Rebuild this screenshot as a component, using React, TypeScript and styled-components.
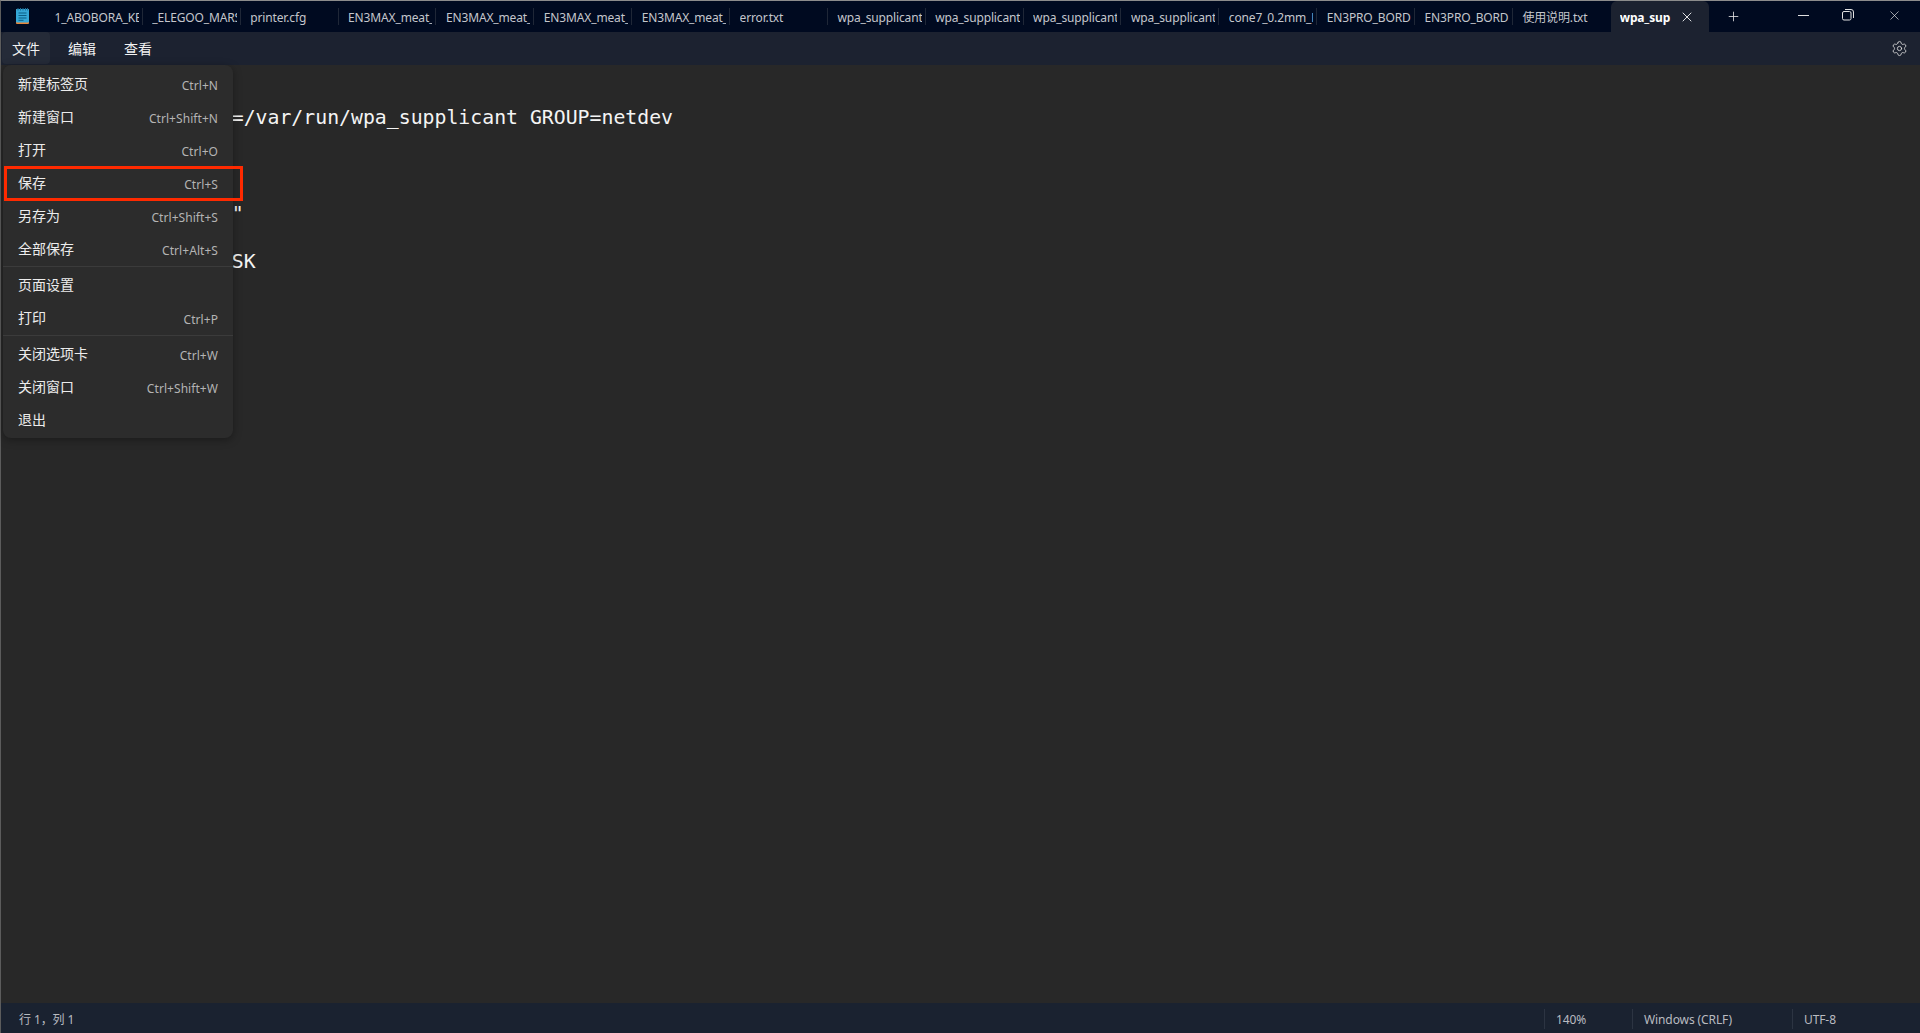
import styled, { createGlobalStyle } from "styled-components"
import { Plus, Settings, X } from "lucide-react"

const GlobalStyle = createGlobalStyle`
  html, body {
    margin: 0;
    padding: 0;
    height: 100%;
    overflow: hidden;
    background: #282828;
  }
  * { box-sizing: border-box; }
`

const Window = styled.div`
  width: 1920px;
  height: 1033px;
  display: flex;
  flex-direction: column;
  position: relative;
  border-top: 1px solid #8c8c8c;
  border-left: 1px solid #5c5c5c;
  font-family: "Noto Sans", "Noto Sans CJK SC", sans-serif;
  font-size: 12px;
  letter-spacing: -0.14px;
  color: #fff;
`

const TitleBar = styled.div`
  height: 31px;
  flex: none;
  display: flex;
  background: #000a20;
`

const AppIcon = styled.div`
  width: 44px;
  flex: none;
  display: flex;
  align-items: center;
  padding: 0 0 1px 15px;
`

const Tab = styled.div<{ $active?: boolean; $last?: boolean }>`
  width: 97.87px;
  height: 31px;
  flex: none;
  display: flex;
  align-items: center;
  padding: 1px 4px 0 9.5px;
  position: relative;
  color: #c4c6cc;
  border-radius: 6px 6px 0 0;
  white-space: nowrap;
  overflow: hidden;

  ${(p) => !p.$last && !p.$active && `
    &::after {
      content: "";
      position: absolute;
      right: 0;
      top: 7px;
      height: 17px;
      width: 1px;
      background: #1f2737;
    }
  `}

  ${(p) => p.$active && `
    background: #1c2230;
    color: #fff;
    font-weight: 700;
    justify-content: space-between;
    padding: 1px 14px 0 9px;
  `}
`

const TabLabel = styled.span`
  display: block;
  overflow: hidden;
  flex: 1;
`

const NewTab = styled.div`
  width: 50px;
  flex: none;
  display: flex;
  align-items: center;
  justify-content: center;
  color: #e6e6e6;
`

const WindowButtons = styled.div`
  margin-left: auto;
  display: flex;
  align-items: center;
  padding: 0 18px 3px 0;
  gap: 33px;
  color: #e0e0e0;
`

const MenuBar = styled.div`
  height: 33px;
  flex: none;
  display: flex;
  align-items: center;
  gap: 8px;
  padding: 0 12px 1px 1px;
  background: #1c2230;
`

const MenuButton = styled.div<{ $open?: boolean }>`
  width: 48px;
  height: 32px;
  display: flex;
  align-items: center;
  justify-content: center;
  font-size: 14px;
  letter-spacing: 0;
  border-radius: 4px;
  color: #f2f2f2;
  background: ${(p) => (p.$open ? "#252b38" : "transparent")};
`

const SettingsButton = styled.div`
  margin-left: auto;
  display: flex;
  color: #dcdcdc;
`

const Editor = styled.pre`
  flex: 1;
  margin: 0;
  padding: 41px 0 0 16px;
  background: #282828;
  color: #f4f4f4;
  font-family: "DejaVu Sans Mono", monospace;
  font-size: 19.82px;
  letter-spacing: 0;
  line-height: 24px;
  overflow: hidden;
`

const StatusBar = styled.div`
  height: 30px;
  flex: none;
  display: flex;
  align-items: center;
  padding-top: 2px;
  letter-spacing: -0.1px;
  background: #1a2230;
  color: #b9bbc0;
`

const Position = styled.div`
  flex: 1;
  padding-left: 18px;
`

const StatusCell = styled.div<{ $width: number }>`
  width: ${(p) => p.$width}px;
  height: 20px;
  display: flex;
  align-items: center;
  padding-left: 11px;
  border-left: 1px solid #2c3442;
`

const Menu = styled.div`
  position: absolute;
  left: 2px;
  top: 64px;
  width: 230px;
  height: 373px;
  padding: 1px 0 0;
  background: #2c2c2c;
  border-radius: 8px;
  box-shadow: 0 2px 8px rgba(0, 0, 0, 0.35);
`

const MenuItem = styled.div<{ $marked?: boolean }>`
  height: 33px;
  display: flex;
  align-items: center;
  justify-content: space-between;
  padding: 0 15px;
  position: relative;
  font-size: 14px;
  letter-spacing: 0;
  color: #ececec;

  ${(p) => p.$marked && `
    &::after {
      content: "";
      position: absolute;
      left: 1px;
      right: -10px;
      top: 1px;
      bottom: -3px;
      border: 3px solid #ff2a00;
    }
  `}
`

const Shortcut = styled.span`
  font-size: 12px;
  letter-spacing: 0.06px;
  padding-top: 6px;
  color: #b4b4b4;
`

const MenuDivider = styled.div`
  height: 1px;
  margin: 2px 0 0;
  background: #3b3b3b;
`

const MinimizeIcon = () => (
  <svg width="11" height="12" viewBox="0 0 11 12" fill="none" stroke="currentColor" strokeWidth="1">
    <path d="M0 6.5h11" />
  </svg>
)

const RestoreIcon = () => (
  <svg width="12" height="12" viewBox="0 0 12 12" fill="none" stroke="currentColor" strokeWidth="1">
    <rect x="0.5" y="2.5" width="8.5" height="8.5" rx="1.5" />
    <path d="M3 0.5h6a2.5 2.5 0 0 1 2.5 2.5v6" />
  </svg>
)

const NotepadIcon = () => (
  <svg width="13" height="16" viewBox="0 0 13 16">
    <rect x="0" y="1" width="13" height="15" rx="1" fill="#e8873a" />
    <rect x="0" y="1" width="13" height="13.5" rx="1" fill="#35a8d8" />
    <path d="M2.5 5h8M2.5 7.5h8M2.5 10h8M2.5 12.3h5" stroke="#0b5f86" strokeWidth="1" />
    <path d="M2 0v2.5M4.5 0v2.5M7 0v2.5M9.5 0v2.5M11.5 0v2.5" stroke="#1d6f9a" strokeWidth="1" />
  </svg>
)

const tabs = [
  "1_ABOBORA_KEYCHAIN", "_ELEGOO_MARS_2", "printer.cfg", "EN3MAX_meat_hook", "EN3MAX_meat_hook",
  "EN3MAX_meat_hook", "EN3MAX_meat_hook", "error.txt", "wpa_supplicant", "wpa_supplicant",
  "wpa_supplicant", "wpa_supplicant", "cone7_0.2mm_PLA", "EN3PRO_BORDER", "EN3PRO_BORDER", "使用说明.txt",
]

const code = `ctrl_interface=DIR=/var/run/wpa_supplicant GROUP=netdev
update_config=1

network={
    ssid="MyWiFi12"

    key_mgmt=WPA-PSK
}`

const App = () => (
  <>
    <GlobalStyle />
    <Window>
      <TitleBar>
        <AppIcon><NotepadIcon /></AppIcon>
        {tabs.map((t, i) => (
          <Tab key={i} $last={i === tabs.length - 1}><TabLabel>{t}</TabLabel></Tab>
        ))}
        <Tab $active>
          <TabLabel>wpa_sup</TabLabel>
          <X size={16} strokeWidth={1.3} />
        </Tab>
        <NewTab><Plus size={15} strokeWidth={1.3} /></NewTab>
        <WindowButtons>
          <MinimizeIcon />
          <RestoreIcon />
          <X size={15} strokeWidth={1.1} />
        </WindowButtons>
      </TitleBar>
      <MenuBar>
        <MenuButton $open>文件</MenuButton>
        <MenuButton>编辑</MenuButton>
        <MenuButton>查看</MenuButton>
        <SettingsButton><Settings size={17} strokeWidth={1.2} /></SettingsButton>
      </MenuBar>
      <Editor>{code}</Editor>
      <StatusBar>
        <Position>行 1，列 1</Position>
        <StatusCell $width={88}>140%</StatusCell>
        <StatusCell $width={160}>Windows (CRLF)</StatusCell>
        <StatusCell $width={128}>UTF-8</StatusCell>
      </StatusBar>
      <Menu>
        <MenuItem>新建标签页<Shortcut>Ctrl+N</Shortcut></MenuItem>
        <MenuItem>新建窗口<Shortcut>Ctrl+Shift+N</Shortcut></MenuItem>
        <MenuItem>打开<Shortcut>Ctrl+O</Shortcut></MenuItem>
        <MenuItem $marked>保存<Shortcut>Ctrl+S</Shortcut></MenuItem>
        <MenuItem>另存为<Shortcut>Ctrl+Shift+S</Shortcut></MenuItem>
        <MenuItem>全部保存<Shortcut>Ctrl+Alt+S</Shortcut></MenuItem>
        <MenuDivider />
        <MenuItem>页面设置</MenuItem>
        <MenuItem>打印<Shortcut>Ctrl+P</Shortcut></MenuItem>
        <MenuDivider />
        <MenuItem>关闭选项卡<Shortcut>Ctrl+W</Shortcut></MenuItem>
        <MenuItem>关闭窗口<Shortcut>Ctrl+Shift+W</Shortcut></MenuItem>
        <MenuItem>退出</MenuItem>
      </Menu>
    </Window>
  </>
)

export default App
